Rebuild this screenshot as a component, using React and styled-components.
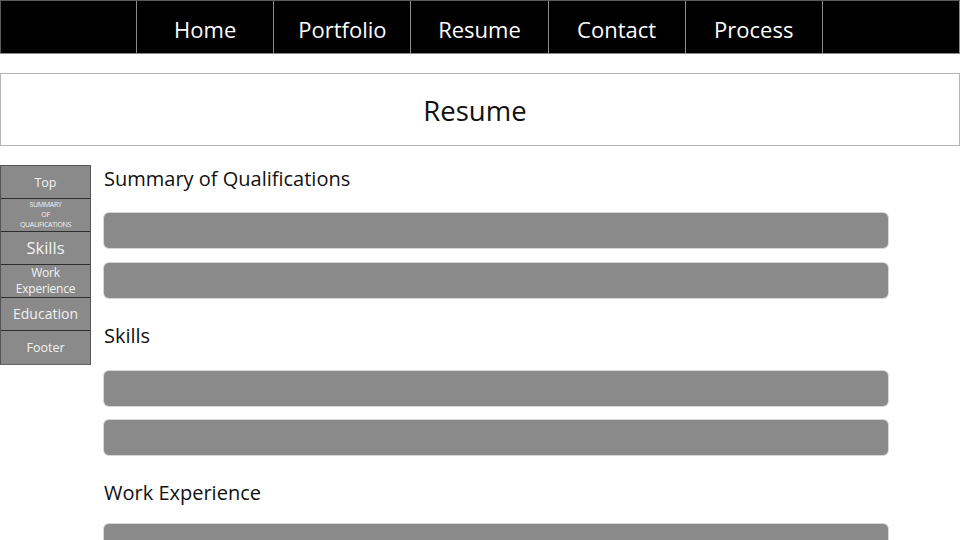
import React from "react";
import styled, { createGlobalStyle } from "styled-components";

const GlobalStyle = createGlobalStyle`
  html, body {
    margin: 0;
    padding: 0;
    background: #fff;
    font-family: "Open Sans", "Noto Sans", sans-serif;
  }
  * { box-sizing: border-box; }
`;

const Page = styled("div")({
  width: "960px",
  height: "540px",
  overflow: "hidden",
});

const NavBar = styled("nav")({
  display: "grid",
  gridTemplateColumns: "repeat(7, 1fr)",
  height: "54px",
  background: "#000",
  borderTop: "1px solid #5a5a5a",
  borderBottom: "1px solid #8a8a8a",
});

const NavItem = styled("a")(({ first }) => ({
  display: "flex",
  alignItems: "center",
  justifyContent: "center",
  color: "#fff",
  fontSize: "22px",
  textDecoration: "none",
  borderRight: "1px solid #8a8a8a",
  borderLeft: first ? "1px solid #5a5a5a" : "none",
  paddingTop: "3px",
}));

const TitleBox = styled("header")({
  marginTop: "19px",
  height: "73px",
  border: "1px solid #b4b4b4",
  display: "flex",
  alignItems: "center",
  justifyContent: "center",
  paddingRight: "10px",
  paddingTop: "2px",
  fontSize: "27.5px",
  color: "#111",
});

const Body = styled("div")({
  display: "flex",
  alignItems: "flex-start",
  gap: "13px",
  marginTop: "19px",
});

const SideNav = styled("aside")({
  width: "91px",
  flexShrink: 0,
  display: "flex",
  flexDirection: "column",
  background: "#8a8a8a",
  border: "1px solid #555",
  borderBottomColor: "#666",
});

const SideItem = styled("a")(({ size, last }) => ({
  height: "33px",
  display: "flex",
  alignItems: "center",
  justifyContent: "center",
  textAlign: "center",
  color: "#f2f2f2",
  fontSize: size,
  lineHeight: 1.2,
  textDecoration: "none",
  borderBottom: last ? "none" : "1px solid #2e2e2e",
}));

const TwoLine = styled("span")({
  fontSize: "12px",
  lineHeight: "16px",
  letterSpacing: "-0.2px",
});

const Tiny = styled("span")({
  fontSize: "7px",
  lineHeight: "10px",
  textTransform: "uppercase",
  letterSpacing: "-0.3px",
});

const Main = styled("main")({
  width: "784px",
  display: "flex",
  flexDirection: "column",
  gap: "25px",
  paddingTop: "1px",
});

const Section = styled("section")(({ rowGap }) => ({
  display: "flex",
  flexDirection: "column",
  gap: `${rowGap}px`,
}));

const Heading = styled("h2")(({ space }) => ({
  margin: `0 0 ${space}px`,
  fontSize: "20px",
  fontWeight: 400,
  lineHeight: "26px",
  color: "#111",
}));

const Bar = styled("div")({
  height: "35px",
  background: "#8a8a8a",
  borderRadius: "5px",
  boxShadow: "0 0 0 1px #d6d6d6",
});

const navLinks = ["", "Home", "Portfolio", "Resume", "Contact", "Process", ""];

const sections = [
  { title: "Summary of Qualifications", bars: 2, space: 6, rowGap: 15 },
  { title: "Skills", bars: 2, space: 8, rowGap: 14 },
  { title: "Work Experience", bars: 2, space: 3, rowGap: 15 },
];

const App = () => {
  return (
    <Page>
      <GlobalStyle />
      <NavBar>
        {navLinks.map((label, index) => (
          <NavItem key={index} first={index === 0}>
            {label}
          </NavItem>
        ))}
      </NavBar>
      <TitleBox>Resume</TitleBox>
      <Body>
        <SideNav>
          <SideItem size="12.5px">Top</SideItem>
          <SideItem>
            <Tiny>
              Summary
              <br />
              of
              <br />
              Qualifications
            </Tiny>
          </SideItem>
          <SideItem size="16.5px">Skills</SideItem>
          <SideItem>
            <TwoLine>
              Work
              <br />
              Experience
            </TwoLine>
          </SideItem>
          <SideItem size="14px">Education</SideItem>
          <SideItem size="12.5px" last>
            Footer
          </SideItem>
        </SideNav>
        <Main>
          {sections.map((section) => (
            <Section key={section.title} rowGap={section.rowGap}>
              <Heading space={section.space}>{section.title}</Heading>
              {Array.from({ length: section.bars }).map((_, i) => (
                <Bar key={i} />
              ))}
            </Section>
          ))}
        </Main>
      </Body>
    </Page>
  );
};

export default App;
